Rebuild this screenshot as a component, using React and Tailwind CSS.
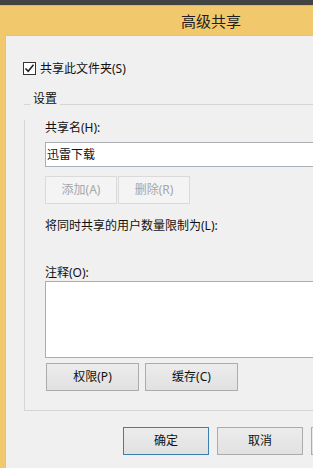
import React from 'react';

const font = { fontFamily: '"Noto Sans", "Noto Sans CJK SC", sans-serif' };

const Button = ({ children, disabled, primary, className = '' }) => (
  <button
    type="button"
    disabled={disabled}
    className={
      'flex items-center justify-center h-[28px] text-[12px] leading-none border ' +
      (disabled
        ? 'bg-[#f4f4f4] border-[#dadada] text-[#a6a6a6] '
        : primary
        ? 'bg-gradient-to-b from-[#ececec] to-[#e1e1e1] border-[#3c7fb1] text-[#111] '
        : 'bg-gradient-to-b from-[#ececec] to-[#e1e1e1] border-[#acacac] text-[#111] ') +
      className
    }
  >
    {children}
  </button>
);

const AdvancedSharing = () => {
  return (
    <div className="w-[313px] h-[468px] overflow-hidden flex flex-col bg-[#f1c86b]" style={font}>
      <div className="h-[5px] bg-[#434343] shrink-0" />
      <div className="h-[30px] shrink-0 flex items-center pl-[181px] pt-[2px] text-[15px] text-[#1e1e1e] border-t border-[#e2b85c]">
        高级共享
      </div>

      <div className="flex-1 ml-[5px] border-l border-t border-[#d8c49a] bg-[#f0f0f0] text-[#111]">
        {/* share checkbox */}
        <div className="mt-[26px] ml-[17px] h-[13px] flex items-center gap-[4px] text-[12px]">
          <span className="w-[13px] h-[13px] border border-[#333] bg-white flex items-center justify-center">
            <svg width="11" height="11" viewBox="0 0 11 11">
              <path d="M1.5 5.5 L4.2 8.3 L9.5 1.8" fill="none" stroke="#222" strokeWidth="1.6" />
            </svg>
          </span>
          <span className="leading-[13px]">共享此文件夹(S)</span>
        </div>

        {/* group box header */}
        <div className="mt-[17px] ml-[18px] h-[13px] flex items-end">
          <div className="w-[6px] h-px bg-[#d5d5d5]" />
          <span className="px-[3px] text-[12px] leading-[14px] mb-[-1px]">设置</span>
          <div className="flex-1 h-px bg-[#d5d5d5]" />
        </div>

        {/* group box body */}
        <div className="ml-[18px] w-[400px] border-l border-b border-[#d5d5d5] pl-[20px] pb-[19px]">
          <div className="mt-[15px] h-[16px] leading-[16px] text-[12px]">共享名(H):</div>
          <div className="mt-[6px] h-[25px] w-[320px] bg-white border border-[#abadb3] border-b-[#a9b1b8] flex items-center pl-[1px] text-[12px]">
            迅雷下载
          </div>

          <div className="mt-[9px] flex gap-px">
            <Button disabled className="w-[72px]">添加(A)</Button>
            <Button disabled className="w-[72px]">删除(R)</Button>
          </div>

          <div className="mt-[14px] h-[16px] leading-[16px] text-[12px]">将同时共享的用户数量限制为(L):</div>

          <div className="mt-[31px] h-[16px] leading-[16px] text-[12px]">注释(O):</div>
          <div className="h-[77px] w-[320px] bg-white border border-[#abadb3]" />

          <div className="mt-[5px] flex gap-[6px] pl-px">
            <Button className="w-[93px]">权限(P)</Button>
            <Button className="w-[93px]">缓存(C)</Button>
          </div>
        </div>

        {/* dialog buttons */}
        <div className="mt-[16px] ml-[117px] flex gap-[8px]">
          <Button primary className="w-[86px] shrink-0">确定</Button>
          <Button className="w-[86px] shrink-0">取消</Button>
          <Button className="w-[86px] shrink-0" />
        </div>
      </div>
    </div>
  );
};

export default function App() {
  return <AdvancedSharing />;
}
